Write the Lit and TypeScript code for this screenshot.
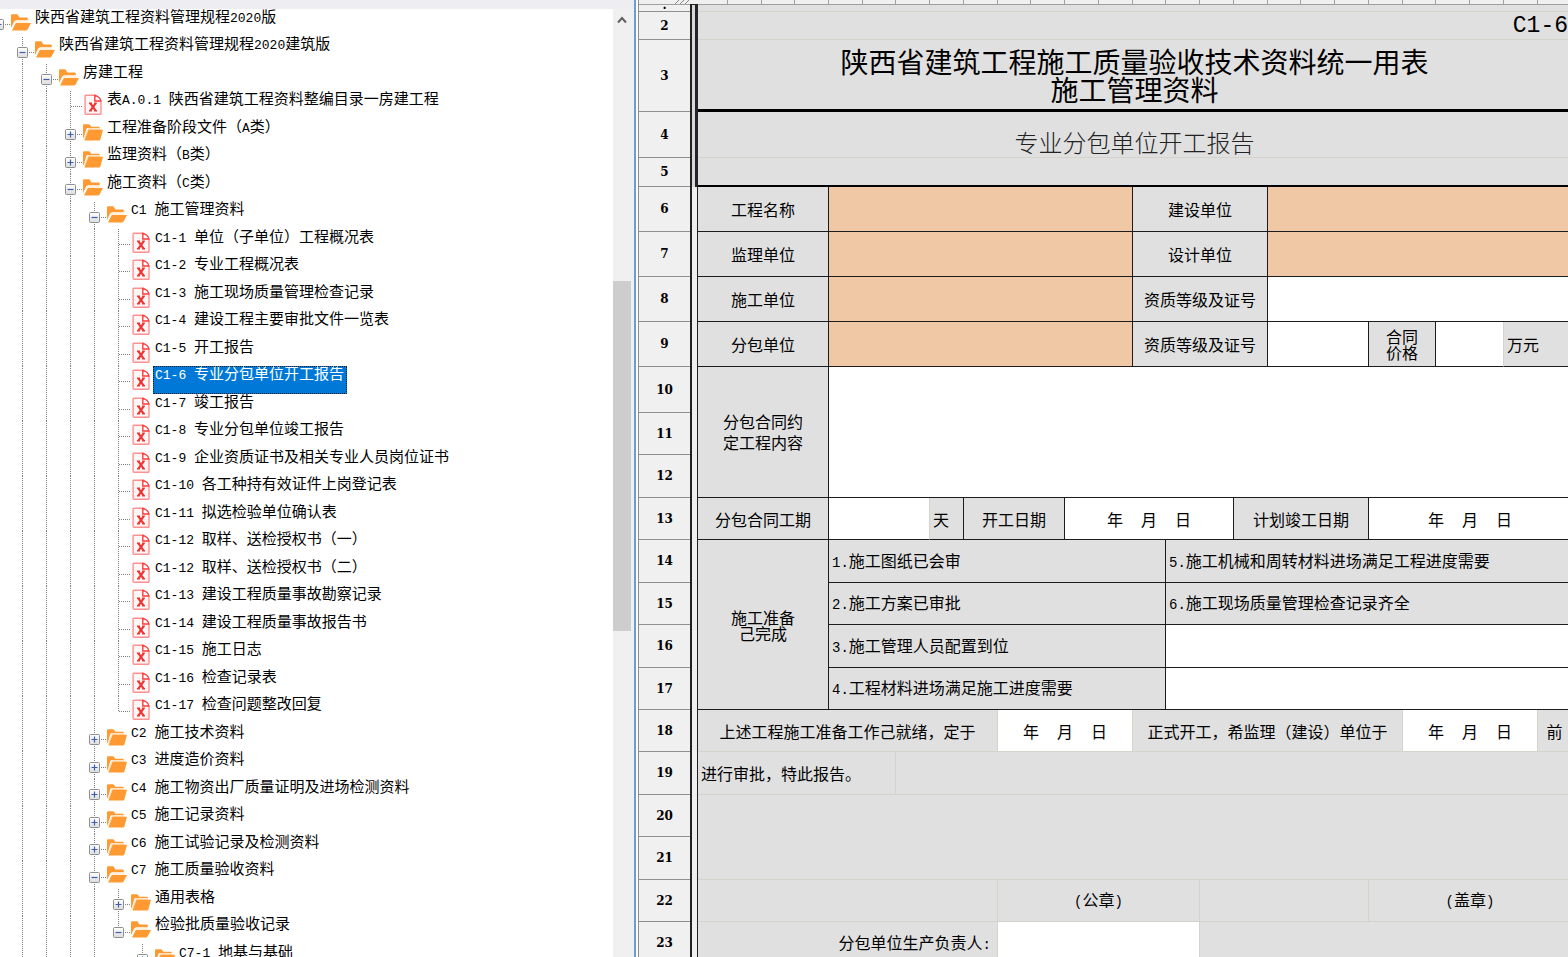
import { LitElement, html, css, svg, nothing } from "lit";
import { customElement, property, state } from "lit/decorators.js";
import { classMap } from "lit/directives/class-map.js";

type Kind = "open" | "closed" | "file";

interface TreeRow {
  level: number;
  kind: Kind;
  label: string;
  guides: number[];
  last?: boolean;
}

const row = (level: number, kind: Kind, label: string, last = false, guideTo = level - 1): TreeRow => ({
  level,
  kind,
  label,
  last,
  guides: Array.from({ length: Math.max(0, guideTo) }, (_, i) => i + 1),
});

const ROWS: TreeRow[] = [
  row(0, "open", "陕西省建筑工程资料管理规程2020版"),
  row(1, "open", "陕西省建筑工程资料管理规程2020建筑版"),
  row(2, "open", "房建工程"),
  row(3, "file", "表A.0.1 陕西省建筑工程资料整编目录一房建工程"),
  row(3, "closed", "工程准备阶段文件（A类）"),
  row(3, "closed", "监理资料（B类）"),
  row(3, "open", "施工资料（C类）"),
  row(4, "open", "C1 施工管理资料"),
  row(5, "file", "C1-1 单位（子单位）工程概况表"),
  row(5, "file", "C1-2 专业工程概况表"),
  row(5, "file", "C1-3 施工现场质量管理检查记录"),
  row(5, "file", "C1-4 建设工程主要审批文件一览表"),
  row(5, "file", "C1-5 开工报告"),
  row(5, "file", "C1-6 专业分包单位开工报告"),
  row(5, "file", "C1-7 竣工报告"),
  row(5, "file", "C1-8 专业分包单位竣工报告"),
  row(5, "file", "C1-9 企业资质证书及相关专业人员岗位证书"),
  row(5, "file", "C1-10 各工种持有效证件上岗登记表"),
  row(5, "file", "C1-11 拟选检验单位确认表"),
  row(5, "file", "C1-12 取样、送检授权书（一）"),
  row(5, "file", "C1-12 取样、送检授权书（二）"),
  row(5, "file", "C1-13 建设工程质量事故勘察记录"),
  row(5, "file", "C1-14 建设工程质量事故报告书"),
  row(5, "file", "C1-15 施工日志"),
  row(5, "file", "C1-16 检查记录表"),
  row(5, "file", "C1-17 检查问题整改回复", true),
  row(4, "closed", "C2 施工技术资料"),
  row(4, "closed", "C3 进度造价资料"),
  row(4, "closed", "C4 施工物资出厂质量证明及进场检测资料"),
  row(4, "closed", "C5 施工记录资料"),
  row(4, "closed", "C6 施工试验记录及检测资料"),
  row(4, "open", "C7 施工质量验收资料"),
  row(5, "closed", "通用表格"),
  row(5, "open", "检验批质量验收记录", true),
  row(6, "closed", "C7-1 地基与基础", false, 4),
];

/** Splits a label so that half-width runs can take the half-width face. */
const mixed = (text: string) =>
  text
    .split(/([\x21-\x7e]+ ?)/)
    .filter(Boolean)
    .map((part) => (/^[\x20-\x7e]+$/.test(part) ? html`<span class="half">${part}</span>` : part));

const folderOpen = svg`
  <path d="M0 1.2Q0 .3 1 .3H6.4L8.4 3.4H15.6Q16.8 3.4 16.8 4.6V6.4H5.2Q3.8 6.4 3.2 7.6L0 14Z" fill="#ff9a33"/>
  <path d="M5 6.2H17.4V9H3.6Z" fill="#fff1e0"/>
  <path d="M4.8 9H20L16.6 15.6Q16.2 16.4 15.2 16.4H1Z" fill="#ff9a33"/>`;

const folderClosed = svg`
  <path d="M0 1.2Q0 .3 1 .3H6.4L8.4 2.8H15.6Q16.8 2.8 16.8 3.8V4H5.2Q3.6 4 3.2 5.4L.6 14.6L0 13Z" fill="#ff9a33"/>
  <path d="M5 4.2H17V6H5.6L2 15H1Z" fill="#ffdcb8"/>
  <path d="M5.6 5.8H20L17.4 15.4Q17.2 16.4 16 16.4H1.4Z" fill="#ff9a33"/>`;

const fileIcon = svg`
  <path d="M3.2 1.2H13L18.6 7V19.4Q18.6 20.2 17.8 20.2H3.6Q2.7 20.2 2.7 19.2V2Q2.7 1.2 3.2 1.2Z" fill="#fff6f6" stroke="#ff9090" stroke-width="1.4"/>
  <path d="M12.4 1.4V7H18.4Q18 3 12.4 1.4Z" fill="#fff" stroke="#ff3b3b" stroke-width="1.4"/>
  <path d="M8 9.4L13.2 16.6M13.2 9.4L8 16.6" stroke="#f03434" stroke-width="2.2" fill="none"/>
  <path d="M6.6 9.3H9.6M11.8 9.3H14.4M6.6 16.8H9.4M11.8 16.8H14.6" stroke="#f03434" stroke-width="1.4"/>`;

@customElement("project-tree")
export class ProjectTree extends LitElement {
  @state() private selected = 13;

  static styles = css`
    :host {
      display: flex;
      flex-direction: column;
      min-width: 0;
      overflow: hidden;
      background: #eeedf2;
      color: #000;
      font: 15px/12px "Noto Sans CJK SC", sans-serif;
    }
    .body {
      flex: 1;
      min-height: 0;
      margin-top: 9px;
      display: flex;
      background: #f0f0f0;
    }
    .list {
      flex: 1;
      min-width: 0;
      margin: 0;
      padding: 0;
      list-style: none;
      overflow: hidden;
      background: #fff;
      display: grid;
      grid-auto-rows: 27px 28px;
      align-content: start;
    }
    .row {
      display: flex;
      margin-left: -14px;
      min-width: 0;
    }
    .guide {
      flex: none;
      width: 24px;
      height: 100%;
      padding: 0;
      border: 0;
      background: none;
      display: block;
    }
    svg {
      display: block;
      overflow: visible;
    }
    .icon {
      flex: none;
      width: 22px;
      padding: 5px 0 0 1px;
    }
    .icon.file {
      padding-top: 3px;
    }
    .label {
      font: inherit;
      color: inherit;
      background: none;
      border: 1px solid transparent;
      margin: 0;
      padding: 0 2px 0 1px;
      height: 100%;
      display: flex;
      align-items: flex-start;
    }
    .text {
      display: block;
      white-space: pre;
    }
    .label.on {
      background: #0078d7;
      border: 1px dotted #ff8728;
      outline: 1px dotted #10202c;
      outline-offset: -1px;
      color: #fff;
    }
    .half {
      font: 13px/12px "Liberation Mono", monospace;
    }
    .bar {
      flex: none;
      width: 18px;
      margin-right: 3px;
      display: grid;
      grid-template-rows: 22px 250fr 350fr 326fr;
    }
    .up {
      border: 0;
      padding: 0;
      background: none;
      display: grid;
      place-items: center;
    }
    .thumb {
      grid-row: 3;
      background: #cdcdcd;
    }
  `;

  private line() {
    return html`<svg class="guide" aria-hidden="true">
      <line x1="12.5" x2="12.5" y1="0" y2="28" stroke="#808080" stroke-dasharray="1 1" />
    </svg>`;
  }

  private node(r: TreeRow) {
    const top = r.level === 0 ? 16 : 0;
    const bottom = r.last || r.level === 0 ? 16 : 28;
    const art = html`<svg width="24" height="27" aria-hidden="true">
      <defs>
        <linearGradient id="g" x1="0" y1="0" x2="0" y2="1">
          <stop offset="0" stop-color="#fff" />
          <stop offset="1" stop-color="#dcdcdc" />
        </linearGradient>
      </defs>
      <line x1="12.5" x2="12.5" y1=${top} y2=${bottom} stroke="#808080" stroke-dasharray="1 1" />
      <line x1="13" x2="25" y1="15.5" y2="15.5" stroke="#808080" stroke-dasharray="1 1" />
      ${r.kind === "file"
        ? nothing
        : svg`<rect x="7.5" y="10.5" width="10" height="10" rx="1" fill="url(#g)" stroke="#8f8f8f"/>
            <path d=${r.kind === "closed" ? "M9.5 15.5H15.5M12.5 12.5V18.5" : "M9.5 15.5H15.5"} stroke="#3f5fae" stroke-width="1.2"/>`}
    </svg>`;
    return r.kind === "file"
      ? html`<span class="guide">${art}</span>`
      : html`<button class="guide" aria-label=${r.kind === "open" ? "折叠" : "展开"}>${art}</button>`;
  }

  render() {
    return html`
      <div class="body">
        <ul class="list" role="tree">
          ${ROWS.map((r, i) => {
            const columns = Array.from({ length: r.level }, (_, k) => k);
            return html`<li class="row" role="treeitem" aria-level=${r.level + 1} aria-selected=${i === this.selected}>
              ${columns.map((k) => (r.guides.includes(k) ? this.line() : html`<span class="guide"></span>`))}
              ${this.node(r)}
              <span class=${classMap({ icon: true, file: r.kind === "file" })}>
                ${r.kind === "file"
                  ? html`<svg width="21" height="21" viewBox="0.6 0 21 21" aria-hidden="true">${fileIcon}</svg>`
                  : html`<svg width="20" height="17" aria-hidden="true">${r.kind === "open" ? folderOpen : folderClosed}</svg>`}
              </span>
              <button class=${classMap({ label: true, on: i === this.selected })} @click=${() => (this.selected = i)}>
                <span class="text">${mixed(r.label)}</span>
              </button>
            </li>`;
          })}
        </ul>
        <div class="bar">
          <button class="up" aria-label="向上滚动">
            <svg width="10" height="8" aria-hidden="true">
              <path d="M1 6.5L5 2L9 6.5" fill="none" stroke="#606060" stroke-width="2" />
            </svg>
          </button>
          <span class="thumb"></span>
        </div>
      </div>
    `;
  }
}

interface Cell {
  span: number;
  rows?: number;
  text?: string;
  lines?: string[];
  date?: boolean;
  input?: string;
  cls?: string;
}

const COLS = [30, 34, 33, 34, 34, 33, 34, 34, 34, 33, 34, 34, 34, 33, 34, 34, 34, 33, 34, 34, 34, 33, 34, 34, 34, 34];

const FORM: { h: number; gutter?: string; cells: Cell[] }[] = [
  { h: 7, gutter: "heavy", cells: [{ span: 26, cls: "soft" }] },
  { h: 28, gutter: "heavy", cells: [{ span: 26, text: "C1-6", cls: "soft code" }] },
  { h: 72, gutter: "heavy", cells: [{ span: 26, lines: ["陕西省建筑工程施工质量验收技术资料统一用表", "施工管理资料"], cls: "title" }] },
  { h: 46, gutter: "heavy", cells: [{ span: 26, text: "专业分包单位开工报告", cls: "soft subtitle" }] },
  { h: 29, gutter: "heavy", cells: [{ span: 26, cls: "rule" }] },
  {
    h: 45,
    cells: [
      { span: 4, text: "工程名称" },
      { span: 9, input: "工程名称", cls: "fill" },
      { span: 4, text: "建设单位" },
      { span: 9, input: "建设单位", cls: "fill" },
    ],
  },
  {
    h: 45,
    cells: [
      { span: 4, text: "监理单位" },
      { span: 9, input: "监理单位", cls: "fill" },
      { span: 4, text: "设计单位" },
      { span: 9, input: "设计单位", cls: "fill" },
    ],
  },
  {
    h: 45,
    cells: [
      { span: 4, text: "施工单位" },
      { span: 9, input: "施工单位", cls: "fill" },
      { span: 4, text: "资质等级及证号" },
      { span: 9, input: "施工单位资质等级及证号", cls: "blank" },
    ],
  },
  {
    h: 45,
    cells: [
      { span: 4, text: "分包单位" },
      { span: 9, input: "分包单位", cls: "fill" },
      { span: 4, text: "资质等级及证号" },
      { span: 3, input: "分包单位资质等级及证号", cls: "blank" },
      { span: 2, lines: ["合同", "价格"], cls: "tight" },
      { span: 2, input: "合同价格", cls: "blank softr" },
      { span: 2, text: "万元", cls: "left noright" },
    ],
  },
  {
    h: 46,
    cells: [
      { span: 4, rows: 3, lines: ["分包合同约", "定工程内容"], cls: "loose" },
      { span: 22, rows: 3, input: "分包合同约定工程内容", cls: "blank" },
    ],
  },
  { h: 42, cells: [] },
  { h: 43, cells: [] },
  {
    h: 42,
    cells: [
      { span: 4, text: "分包合同工期" },
      { span: 3, input: "分包合同工期", cls: "blank softr" },
      { span: 1, text: "天", cls: "left" },
      { span: 3, text: "开工日期" },
      { span: 5, date: true, cls: "blank" },
      { span: 4, text: "计划竣工日期" },
      { span: 6, date: true, cls: "blank" },
    ],
  },
  {
    h: 43,
    cells: [
      { span: 4, rows: 4, lines: ["施工准备", "己完成"], cls: "tight" },
      { span: 10, text: "1.施工图纸已会审", cls: "left" },
      { span: 12, text: "5.施工机械和周转材料进场满足工程进度需要", cls: "left" },
    ],
  },
  {
    h: 42,
    cells: [
      { span: 10, text: "2.施工方案已审批", cls: "left" },
      { span: 12, text: "6.施工现场质量管理检查记录齐全", cls: "left" },
    ],
  },
  {
    h: 43,
    cells: [
      { span: 10, text: "3.施工管理人员配置到位", cls: "left" },
      { span: 12, input: "准备事项七", cls: "blank" },
    ],
  },
  {
    h: 42,
    cells: [
      { span: 10, text: "4.工程材料进场满足施工进度需要", cls: "left" },
      { span: 12, input: "准备事项八", cls: "blank" },
    ],
  },
  {
    h: 42,
    cells: [
      { span: 9, text: "上述工程施工准备工作己就绪，定于", cls: "soft" },
      { span: 4, date: true, cls: "soft blank" },
      { span: 8, text: "正式开工，希监理（建设）单位于", cls: "soft" },
      { span: 4, date: true, cls: "soft blank" },
      { span: 1, text: "前", cls: "soft" },
    ],
  },
  {
    h: 43,
    cells: [
      { span: 6, text: "进行审批，特此报告。", cls: "soft left" },
      { span: 20, cls: "soft" },
    ],
  },
  { h: 42, cells: [{ span: 26, rows: 2, cls: "soft" }] },
  { h: 43, cells: [] },
  {
    h: 42,
    cells: [
      { span: 9, cls: "soft" },
      { span: 6, text: "(公章)", cls: "soft" },
      { span: 5, cls: "soft" },
      { span: 6, text: "(盖章)", cls: "soft" },
    ],
  },
  {
    h: 43,
    cells: [
      { span: 9, text: "分包单位生产负责人:", cls: "soft right" },
      { span: 6, input: "分包单位生产负责人", cls: "soft blank" },
      { span: 11, cls: "soft" },
    ],
  },
];

@customElement("form-sheet")
export class FormSheet extends LitElement {
  @property({ type: Number }) firstRow = 1;

  static styles = css`
    :host {
      display: block;
      min-width: 0;
      overflow: hidden;
      background: #e0e0e0;
      color: #000;
      border-left: 1px solid #8c8c8c;
      font: 16px/18px "Noto Sans CJK SC", sans-serif;
    }
    table {
      table-layout: fixed;
      width: 933px;
      border-collapse: separate;
      border-spacing: 0;
    }
    .c-head {
      width: 51px;
    }
    .c-gutter {
      width: 8px;
    }
    th,
    td {
      box-sizing: border-box;
      padding: 0;
      text-align: center;
      vertical-align: middle;
      font-weight: 400;
      white-space: pre;
    }
    thead th {
      height: 5px;
      font-size: 0;
      line-height: 0;
      white-space: normal;
      background: #f0f0f0;
      border-right: 1px solid #a0a0a0;
      border-bottom: 1px solid #a0a0a0;
    }
    thead .corner {
      border-right: 0;
    }
    thead .corner svg {
      display: block;
      margin-left: auto;
    }
    thead .edge {
      border-right: 0;
      border-bottom-color: #222;
    }
    .num {
      background: #f0f0f0;
      border-bottom: 1px solid #909090;
      font: bold 12px/14px "DejaVu Serif", serif;
    }
    .num.tiny {
      line-height: 5px;
    }
    .gutter {
      background: #efefef;
      border-left: 2px solid #222;
      border-right: 1px solid #222;
    }
    .gutter.heavy {
      background: #d8d8d8;
      border-right: 3px solid #24252c;
    }
    td.cell {
      background: #e0e0e0;
      border-right: 1px solid #1c1c1c;
      border-bottom: 1px solid #1c1c1c;
    }
    td.fill {
      background: #f0c8a5;
    }
    td.blank {
      background: #fff;
    }
    td.soft {
      border-color: #d6d3ca;
    }
    td.softr {
      border-right-color: #d6d3ca;
    }
    td.noright {
      border-right-color: #e0e0e0;
    }
    td.left {
      text-align: left;
      padding-left: 3px;
    }
    td.right {
      text-align: right;
      padding-right: 6px;
    }
    td.title {
      font-size: 28px;
      line-height: 28px;
      border-bottom: 3px solid #000;
    }
    td.rule {
      border-bottom: 2px solid #000;
    }
    td.subtitle {
      font-size: 24px;
      line-height: 30px;
      font-weight: 300;
      color: #222;
      vertical-align: bottom;
    }
    td.code {
      text-align: right;
      padding-right: 3px;
    }
    td.code .half {
      font-size: 23px;
      line-height: 26px;
    }
    td.tight {
      line-height: 16px;
    }
    td.loose {
      line-height: 21px;
    }
    .line {
      display: block;
    }
    .half {
      font-family: "Liberation Mono", monospace;
      font-size: 14px;
    }
    .date {
      display: flex;
      justify-content: center;
      gap: 18px;
    }
    input {
      display: block;
      box-sizing: border-box;
      width: 100%;
      height: 24px;
      padding: 0 4px;
      border: 0;
      outline: 0;
      background: none;
      font: inherit;
    }
  `;

  private content(c: Cell) {
    if (c.date) return html`<span class="date"><span>年</span><span>月</span><span>日</span></span>`;
    if (c.input) return html`<input type="text" aria-label=${c.input} />`;
    if (c.lines) return c.lines.map((l) => html`<span class="line">${l}</span>`);
    return c.text ? mixed(c.text) : nothing;
  }

  render() {
    return html`<table>
      <colgroup>
        <col class="c-head" />
        <col class="c-gutter" />
        ${COLS.map((w) => html`<col style="width:${w}px" />`)}
      </colgroup>
      <thead>
        <tr>
          <th class="corner">
            <svg width="15" height="4" aria-hidden="true">
              <path d="M0 4L4 0M5 4L9 0M10 4L14 0" stroke="#8a8a8a" />
            </svg>
          </th>
          <th class="edge"></th>
          ${COLS.map(() => html`<th></th>`)}
        </tr>
      </thead>
      <tbody>
        ${FORM.map(
          (r, i) => html`<tr style="height:${r.h}px">
            <th scope="row" class=${i === 0 ? "num tiny" : "num"}>${i === 0 ? "·" : i + this.firstRow}</th>
            <td class="gutter ${r.gutter ?? ""}"></td>
            ${r.cells.map(
              (c) =>
                html`<td class="cell ${c.cls ?? ""}" colspan=${c.span} rowspan=${c.rows ?? 1}>${this.content(c)}</td>`
            )}
          </tr>`
        )}
      </tbody>
    </table>`;
  }
}

@customElement("app-root")
export class AppRoot extends LitElement {
  static styles = css`
    :host {
      display: flex;
      height: 100vh;
      overflow: hidden;
      background: #fff;
    }
    project-tree {
      flex: 0 1 634px;
    }
    .split {
      flex: none;
      width: 2px;
      margin-right: 2px;
      background: #6a9ddb;
    }
    form-sheet {
      flex: 1;
    }
  `;

  render() {
    return html`<project-tree></project-tree>
      <div class="split" role="separator"></div>
      <form-sheet></form-sheet>`;
  }
}
